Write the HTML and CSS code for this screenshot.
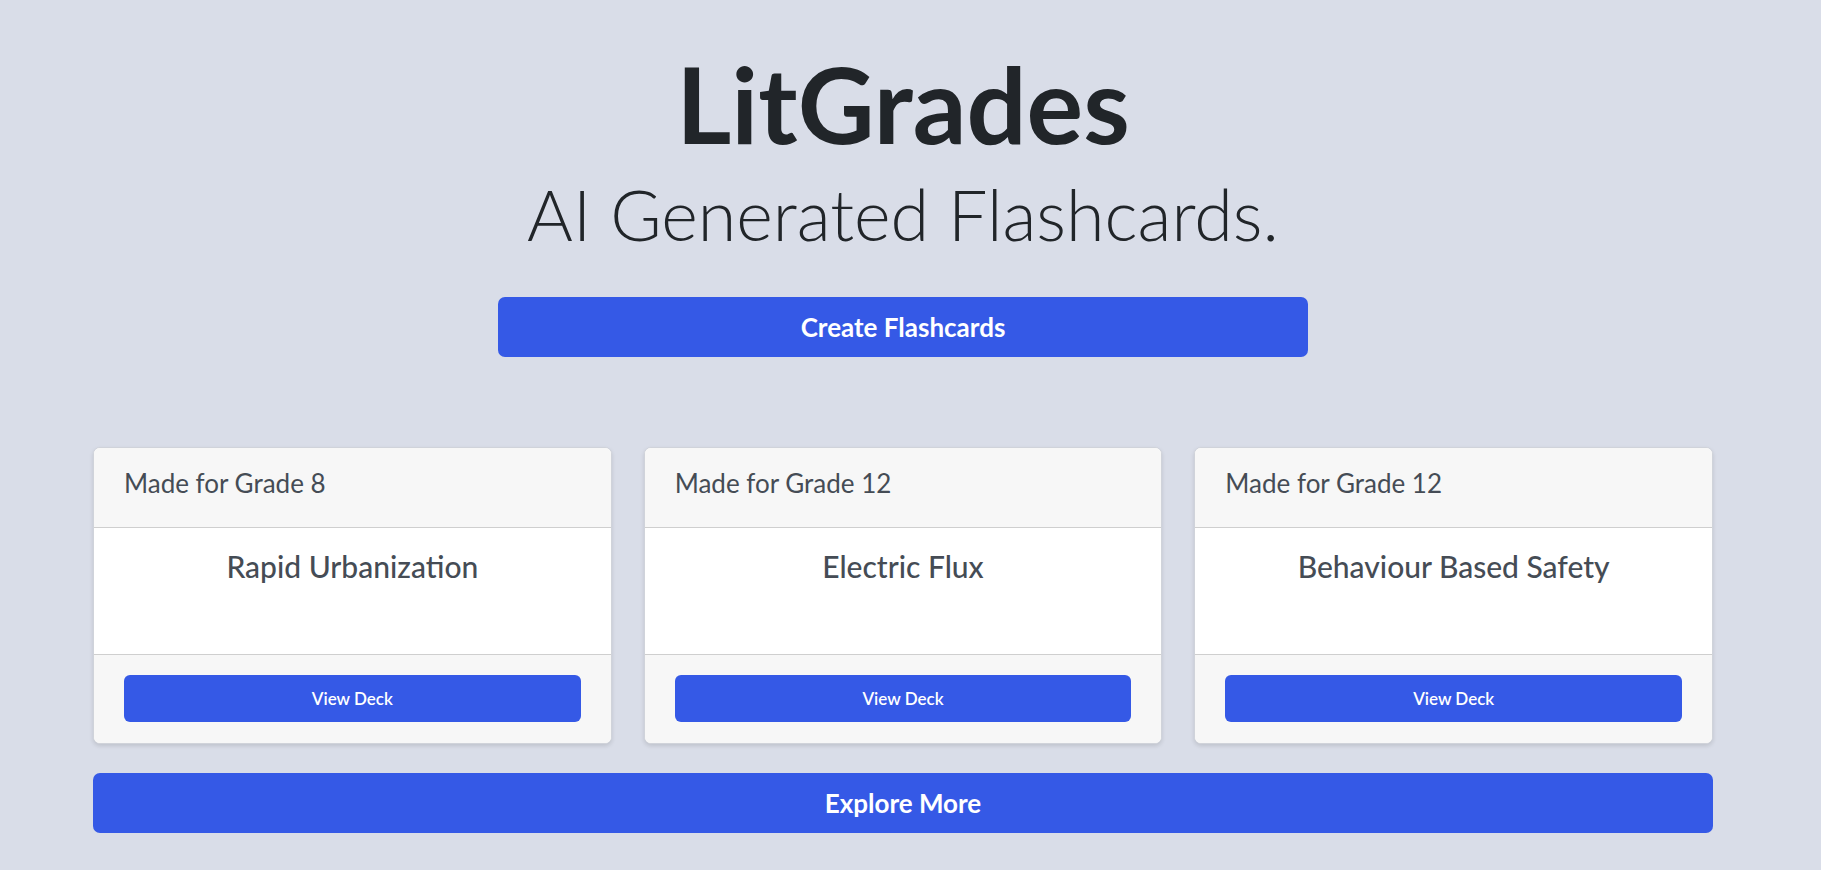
FILE: index.html
```html
<!DOCTYPE html>
<html lang="en">
<head>
<meta charset="utf-8">
<title>LitGrades</title>
<link rel="stylesheet" href="styles.css">
</head>
<body>
<main class="page">
  <header class="hero">
    <h1 class="brand">LitGrades</h1>
    <p class="tagline">AI Generated Flashcards.</p>
    <a class="btn btn-create" href="#">Create Flashcards</a>
  </header>
  <section class="decks">
    <div class="card">
      <div class="card-header">Made for Grade 8</div>
      <div class="card-body"><h2 class="card-title">Rapid Urbanization</h2></div>
      <div class="card-footer"><a class="btn btn-view" href="#">View Deck</a></div>
    </div>
    <div class="card">
      <div class="card-header">Made for Grade 12</div>
      <div class="card-body"><h2 class="card-title">Electric Flux</h2></div>
      <div class="card-footer"><a class="btn btn-view" href="#">View Deck</a></div>
    </div>
    <div class="card">
      <div class="card-header">Made for Grade 12</div>
      <div class="card-body"><h2 class="card-title">Behaviour Based Safety</h2></div>
      <div class="card-footer"><a class="btn btn-view" href="#">View Deck</a></div>
    </div>
  </section>
  <a class="btn btn-explore" href="#">Explore More</a>
</main>
</body>
</html>
```

FILE: styles.css
```css
* { box-sizing: border-box; }
html, body { height: 100%; }
body {
  margin: 0;
  padding-right: 15px;
  background: #d9dde8;
  font-family: Lato, "Open Sans", sans-serif;
  color: #212529;
  overflow: hidden;
}
.page {
  width: 1620px;
  margin: 0 auto;
  display: flex;
  flex-direction: column;
  align-items: stretch;
}
.hero {
  display: flex;
  flex-direction: column;
  align-items: center;
  padding-top: 44px;
}
.brand {
  margin: 0;
  font-size: 106px;
  font-weight: 700;
  line-height: 118px;
  color: #212529;
}
.tagline {
  margin: 11px 0 0;
  font-size: 70px;
  font-weight: 300;
  line-height: 82px;
  color: #212529;
}
.btn {
  display: flex;
  align-items: center;
  justify-content: center;
  background: #3559e6;
  color: #fff;
  text-decoration: none;
  border-radius: 7px;
  font-weight: 700;
}
.btn-create {
  margin-top: 42px;
  width: 810px;
  height: 60px;
  font-size: 26px;
}
.decks {
  margin-top: 90px;
  display: grid;
  grid-template-columns: repeat(3, 1fr);
  gap: 32px;
}
.card {
  background: #fff;
  border: 1px solid #d0d3da;
  border-radius: 7px;
  box-shadow: 0 2px 4px rgba(0, 0, 0, 0.12);
  overflow: hidden;
  display: flex;
  flex-direction: column;
}
.card-header {
  height: 80px;
  background: #f7f7f7;
  border-bottom: 1px solid #cfcfcf;
  padding: 19px 30px 0;
  font-size: 26px;
  line-height: 32px;
  color: #454c55;
}
.card-body {
  height: 126px;
  padding-top: 19px;
  text-align: center;
}
.card-title {
  margin: 0;
  font-size: 30px;
  font-weight: 500;
  line-height: 38px;
  color: #454c55;
}
.card-footer {
  height: 89px;
  background: #f7f7f7;
  border-top: 1px solid #cfcfcf;
  padding: 20px 30px 0;
}
.btn-view {
  height: 47px;
  font-size: 17px;
  font-weight: 600;
  border-radius: 6px;
}
.btn-explore {
  margin-top: 29px;
  height: 60px;
  font-size: 26px;
}
```
